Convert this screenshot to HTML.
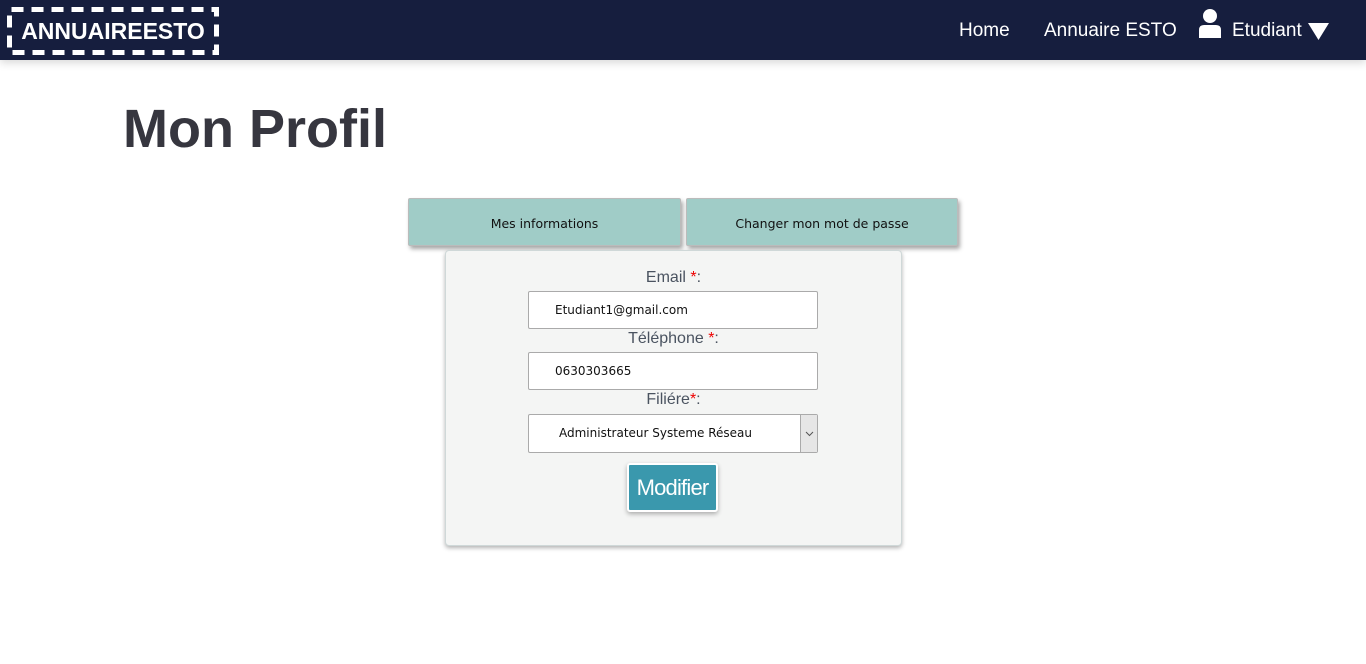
<!DOCTYPE html>
<html><head><meta charset="utf-8"><style>
*{box-sizing:border-box;margin:0;padding:0}
body{width:1366px;height:664px;background:#fff;font-family:"Liberation Sans",sans-serif;position:relative;overflow:hidden}
.nav{position:absolute;left:0;top:0;width:1366px;height:60px;background:#161e3e;box-shadow:0 3px 8px rgba(0,0,0,.15)}
.logo{position:absolute;left:7px;top:7px;width:212px;height:48px;color:#fff;font-weight:bold;font-size:23px;line-height:48px;text-align:center}
.nl{position:absolute;top:20px;color:#fff;font-size:19px}
h1{position:absolute;left:123px;top:98px;font-size:54px;font-weight:bold;color:#36363f}
.tab{position:absolute;top:198px;height:48px;background:#a0ccc7;border:1px solid #bbb;border-radius:2px;box-shadow:2px 3px 4px rgba(0,0,0,.35);font-size:12.5px;color:#111;text-align:center;line-height:50px;font-family:"DejaVu Sans",sans-serif}
.card{position:absolute;left:445px;top:250px;width:457px;height:296px;background:#f4f5f4;border:1px solid #cfd8d8;border-radius:4px;box-shadow:0 2px 4px rgba(0,0,0,.3)}
.lbl{position:absolute;left:0;width:100%;text-align:center;font-size:16px;color:#4a5360}
.lbl b{color:#e00;font-weight:normal}
.inp{position:absolute;left:82px;width:290px;height:38px;background:#fff;border:1px solid #aaa;border-radius:2px;font-family:"DejaVu Sans",sans-serif;font-size:12px;color:#111;padding-left:26px;line-height:36px}
.btn{position:absolute;left:181px;top:212px;width:91px;height:49px;background:#3a98ad;border:2px solid #fff;border-radius:3px;box-shadow:0 2px 5px rgba(0,0,0,.3);color:#fff;font-size:22px;letter-spacing:-0.8px;text-align:center;line-height:46px}
</style></head><body>
<div class="nav">
<svg style="position:absolute;left:7px;top:7px" width="212" height="48"><rect x="2.5" y="2.5" width="207" height="43" fill="none" stroke="#fff" stroke-width="5" stroke-dasharray="12 8" stroke-dashoffset="-2"/></svg>
<div class="logo">ANNUAIREESTO</div>
<div class="nl" style="left:959px">Home</div>
<div class="nl" style="left:1044px">Annuaire ESTO</div>
<svg style="position:absolute;left:1198px;top:8px" width="25" height="30" viewBox="0 0 25 30"><circle cx="12" cy="8" r="7" fill="#fff"/><path d="M1 30V22Q1 17 6 17H18Q23 17 23 22V30Z" fill="#fff"/></svg>
<div class="nl" style="left:1232px">Etudiant</div>
<svg style="position:absolute;left:1308px;top:23px" width="21" height="17"><path d="M0 0H21L10.5 17Z" fill="#fff"/></svg>
</div>
<h1>Mon Profil</h1>
<div class="tab" style="left:408px;width:273px">Mes informations</div>
<div class="tab" style="left:686px;width:272px">Changer mon mot de passe</div>
<div class="card">
<div class="lbl" style="top:18px">Email <b>*</b>:</div>
<div class="inp" style="top:40px">Etudiant1@gmail.com</div>
<div class="lbl" style="top:79px">Téléphone <b>*</b>:</div>
<div class="inp" style="top:101px">0630303665</div>
<div class="lbl" style="top:140px">Filiére<b>*</b>:</div>
<div class="inp" style="top:163px;height:39px;padding-left:30px">Administrateur Systeme Réseau
<div style="position:absolute;right:0;top:0;width:17px;height:37px;background:#e6e6e6;border-left:1px solid #aaa"><svg width="17" height="37"><path d="M5 17L8.5 20.5L12 17" stroke="#555" fill="none"/></svg></div></div>
<div class="btn">Modifier</div>
</div>
</body></html>
